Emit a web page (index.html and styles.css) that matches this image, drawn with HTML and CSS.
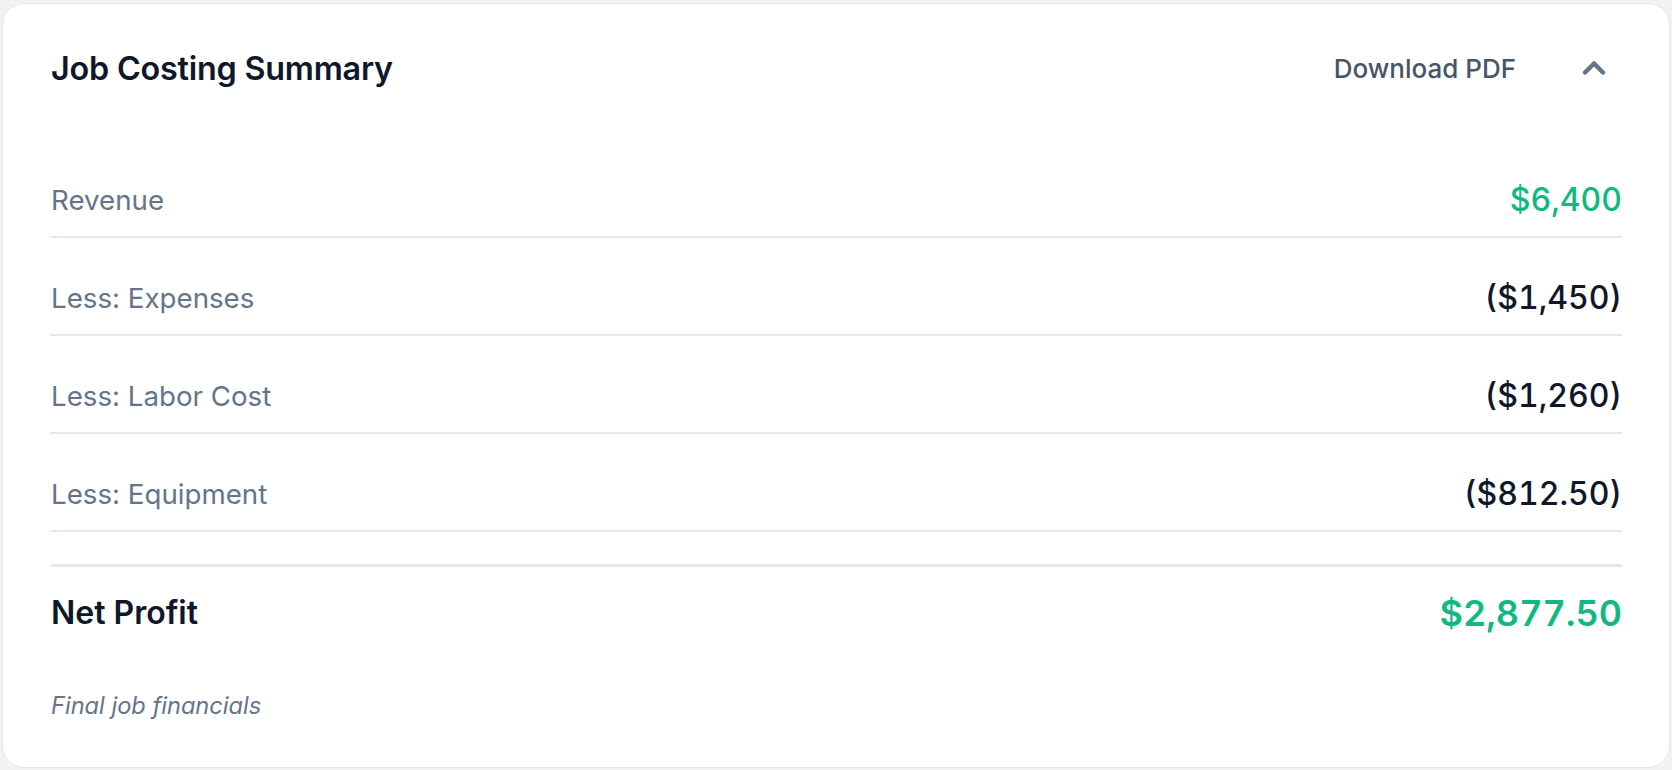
FILE: index.html
```html
<!DOCTYPE html>
<html lang="en">
<head>
<meta charset="utf-8">
<title>Job Costing Summary</title>
<link rel="stylesheet" href="styles.css">
</head>
<body>
  <section class="card">
    <header class="card-header">
      <h2 class="title">Job Costing Summary</h2>
      <div class="actions">
        <button class="download" type="button">Download PDF</button>
        <button class="toggle" type="button" aria-label="Collapse">
          <svg class="chevron" viewBox="0 0 24 24" fill="none" stroke="currentColor" stroke-width="3" stroke-linecap="round" stroke-linejoin="round"><path d="m18 15-6-6-6 6"/></svg>
        </button>
      </div>
    </header>
    <div class="rows">
      <div class="row">
        <span class="label">Revenue</span>
        <span class="value positive">$6,400</span>
      </div>
      <div class="row">
        <span class="label">Less: Expenses</span>
        <span class="value">($1,450)</span>
      </div>
      <div class="row">
        <span class="label">Less: Labor Cost</span>
        <span class="value">($1,260)</span>
      </div>
      <div class="row">
        <span class="label">Less: Equipment</span>
        <span class="value">($812.50)</span>
      </div>
    </div>
    <div class="total">
      <span class="total-label">Net Profit</span>
      <span class="total-value">$2,877.50</span>
    </div>
    <p class="note">Final job financials</p>
  </section>
</body>
</html>
```

FILE: styles.css
```css
* { box-sizing: border-box; }

html, body {
  margin: 0;
  background: #f1f2f4;
}

body {
  padding: 3px 2px 2px 2px;
  font-family: Inter, "Noto Sans", "Liberation Sans", sans-serif;
}

.card {
  height: 765px;
  background: #ffffff;
  border: 1px solid #e5e7eb;
  border-radius: 22px;
  padding: 43px 47px 0 48px;
}

.card-header {
  display: flex;
  align-items: center;
  justify-content: space-between;
  height: 42px;
}

.title {
  margin: 0;
  font-size: 32.3px;
  font-weight: 600;
  color: #0f172a;
  letter-spacing: -0.2px;
}

.actions {
  display: flex;
  align-items: center;
}

.download {
  background: none;
  border: 0;
  padding: 0;
  margin-right: 60px;
  font-family: inherit;
  font-size: 26px;
  font-weight: 500;
  color: #475569;
  cursor: pointer;
}

.toggle {
  background: none;
  border: 0;
  padding: 0;
  margin-right: 10px;
  color: #64748b;
  display: flex;
  cursor: pointer;
}

.chevron {
  width: 36px;
  height: 36px;
  display: block;
}

.rows {
  display: flex;
  flex-direction: column;
  gap: 22px;
  margin-top: 73px;
}

.row {
  display: flex;
  align-items: center;
  justify-content: space-between;
  padding: 18px 0 16px;
  line-height: 40px;
  border-bottom: 2px solid #e2e8f0;
}

.label {
  font-size: 27.7px;
  color: #64748b;
}

.value {
  font-size: 32px;
  font-weight: 500;
  color: #0f172a;
  font-variant-numeric: tabular-nums;
}

.value.positive {
  color: #10b981;
}

.total {
  display: flex;
  align-items: center;
  justify-content: space-between;
  margin-top: 32px;
  border-top: 3px solid #e2e8f0;
  padding-top: 24px;
  line-height: 44px;
}

.total-label {
  font-size: 32px;
  font-weight: 600;
  color: #0f172a;
}

.total-value {
  font-size: 36px;
  font-weight: 600;
  color: #10b981;
  font-variant-numeric: tabular-nums;
}

.note {
  margin: 55px 0 0;
  font-size: 23.6px;
  line-height: 32px;
  font-style: italic;
  color: #64748b;
}
```
